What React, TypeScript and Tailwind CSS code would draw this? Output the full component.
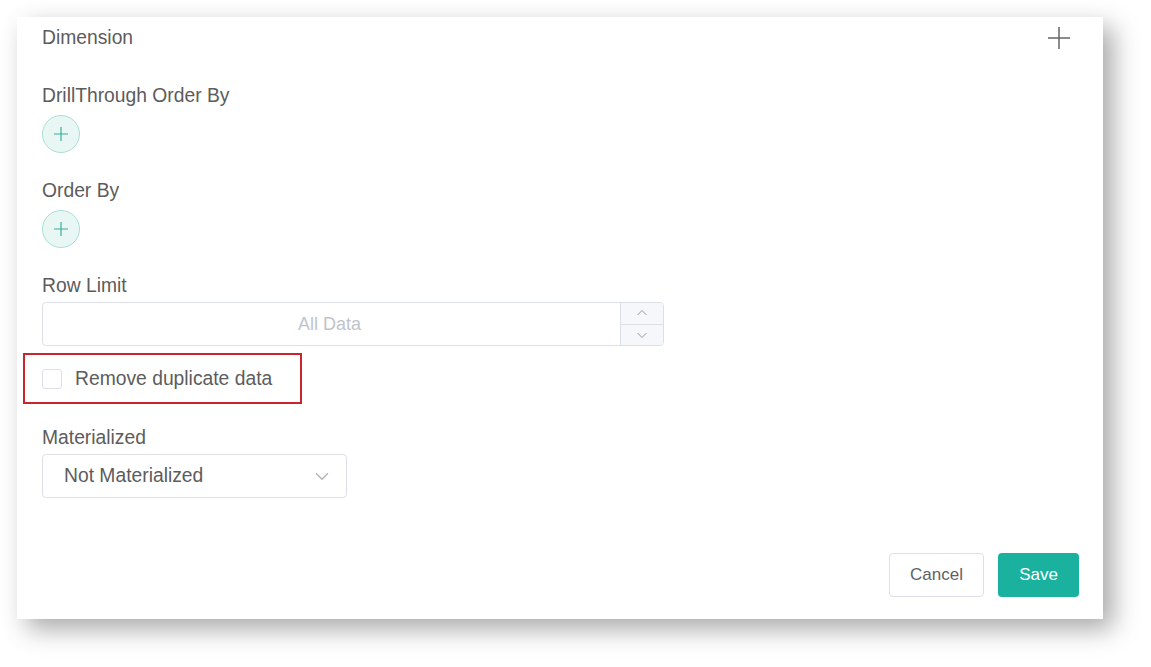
import React from "react";

const font = { fontFamily: '"Liberation Sans", Arial, sans-serif' };

function PlusCircle() {
  return (
    <button
      type="button"
      className="flex h-[38px] w-[38px] items-center justify-center rounded-full border border-[#a8e0d5] bg-[#e8f7f4]"
    >
      <svg width="16" height="16" viewBox="0 0 16 16" fill="none">
        <path d="M8 1v14M1 8h14" stroke="#3aae9b" strokeWidth="1.2" />
      </svg>
    </button>
  );
}

function Chevron({ dir, size = 12, color = "#999" }: { dir: "up" | "down"; size?: number; color?: string }) {
  return (
    <svg width={size} height={size} viewBox="0 0 12 12" fill="none">
      {dir === "up" ? (
        <path d="M1.5 8L6 3.5 10.5 8" stroke={color} strokeWidth="1" />
      ) : (
        <path d="M1.5 4L6 8.5 10.5 4" stroke={color} strokeWidth="1" />
      )}
    </svg>
  );
}

export default function App() {
  return (
    <div className="min-h-[667px] w-[1151px] bg-white pl-[17px] pt-[17px]" style={font}>
      <div className="flex h-[602px] w-[1086px] flex-col bg-white pl-[25px] pr-[24px] pt-[9px] shadow-[10px_10px_24px_rgba(0,0,0,0.34)]">
        <div className="flex h-[24px] items-center justify-between pr-[8px]">
          <span className="text-[19.3px] leading-[24px] text-[#5c5c5c]">Dimension</span>
          <svg width="24" height="24" viewBox="0 0 24 24" fill="none">
            <path d="M12 1v22M1 12h22" stroke="#666" strokeWidth="1.5" />
          </svg>
        </div>

        <div className="mt-[34px] text-[19.3px] leading-[24px] text-[#5c5c5c]">DrillThrough Order By</div>
        <div className="mt-[7px]">
          <PlusCircle />
        </div>

        <div className="mt-[26px] text-[19.3px] leading-[24px] text-[#5c5c5c]">Order By</div>
        <div className="mt-[7px]">
          <PlusCircle />
        </div>

        <div className="mt-[26px] text-[19.3px] leading-[24px] text-[#5c5c5c]">Row Limit</div>
        <div className="mt-[4px] flex h-[44px] w-[622px] overflow-hidden rounded-[4px] border border-[#dcdfe6]">
          <div className="flex flex-1 items-center justify-center pr-[4px] text-[18px] text-[#c0c4cc]">All Data</div>
          <div className="flex w-[43px] flex-col border-l border-[#dcdfe6] bg-[#f5f7fa]">
            <div className="flex flex-1 items-center justify-center border-b border-[#dcdfe6]">
              <Chevron dir="up" />
            </div>
            <div className="flex flex-1 items-center justify-center">
              <Chevron dir="down" />
            </div>
          </div>
        </div>

        <div className="-ml-[19px] mt-[7px] flex h-[51px] w-[279px] items-center border-2 border-[#c9252f] pl-[17px]">
          <span className="h-[20px] w-[20px] rounded-[3px] border border-[#dcdfe6] bg-white" />
          <span className="ml-[13px] pt-[2px] text-[19.3px] text-[#5c5c5c]">Remove duplicate data</span>
        </div>

        <div className="mt-[22px] text-[19.3px] leading-[24px] text-[#5c5c5c]">Materialized</div>
        <div className="mt-[4px] flex h-[44px] w-[305px] items-center justify-between rounded-[4px] border border-[#dcdfe6] pl-[21px] pr-[16px]">
          <span className="text-[19.3px] text-[#5c5c5c]">Not Materialized</span>
          <Chevron dir="down" size={16} color="#b0b3b8" />
        </div>

        <div className="mt-[55px] flex justify-end gap-[14px]">
          <button
            type="button"
            className="h-[44px] w-[95px] rounded-[4px] border border-[#dcdfe6] bg-white text-[17px] text-[#606266]"
          >
            Cancel
          </button>
          <button
            type="button"
            className="h-[44px] w-[81px] rounded-[4px] bg-[#1ab29f] text-[17px] text-white"
          >
            Save
          </button>
        </div>
      </div>
    </div>
  );
}
